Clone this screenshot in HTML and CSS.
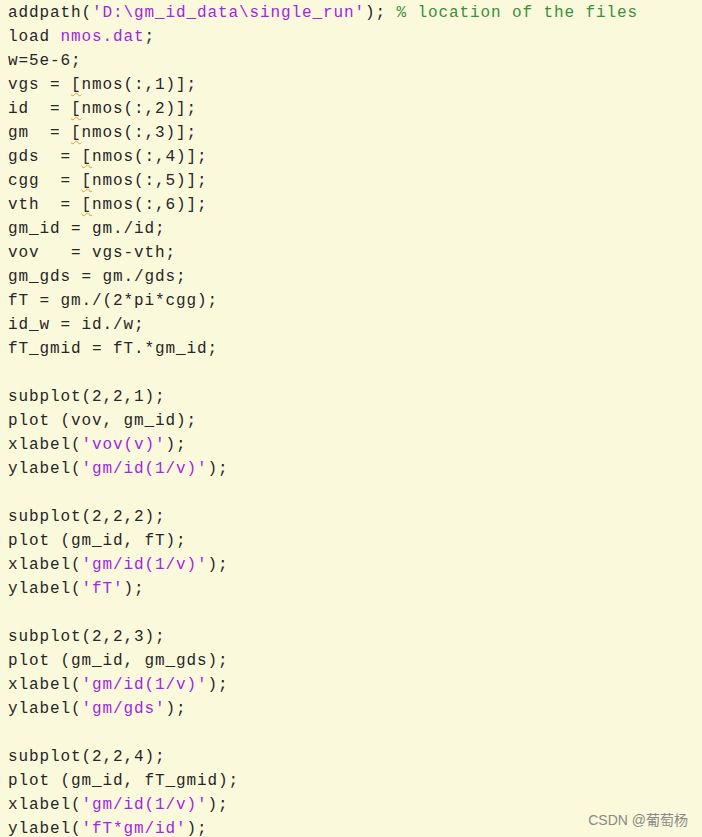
FILE: index.html
```html
<!DOCTYPE html>
<html>
<head>
<meta charset="utf-8">
<link rel="stylesheet" href="styles.css">
</head>
<body>
<pre class="code"><span>addpath(<span class="str">'D:\gm_id_data\single_run'</span>); <span class="cmt">% location of the files</span></span>
<span>load <span class="str">nmos.dat</span>;</span>
<span>w=5e-6;</span>
<span>vgs = <span class="warn">[</span>nmos(:,1)];</span>
<span>id  = <span class="warn">[</span>nmos(:,2)];</span>
<span>gm  = <span class="warn">[</span>nmos(:,3)];</span>
<span>gds  = <span class="warn">[</span>nmos(:,4)];</span>
<span>cgg  = <span class="warn">[</span>nmos(:,5)];</span>
<span>vth  = <span class="warn">[</span>nmos(:,6)];</span>
<span>gm_id = gm./id;</span>
<span>vov   = vgs-vth;</span>
<span>gm_gds = gm./gds;</span>
<span>fT = gm./(2*pi*cgg);</span>
<span>id_w = id./w;</span>
<span>fT_gmid = fT.*gm_id;</span>

<span>subplot(2,2,1);</span>
<span>plot (vov, gm_id);</span>
<span>xlabel(<span class="str">'vov(v)'</span>);</span>
<span>ylabel(<span class="str">'gm/id(1/v)'</span>);</span>

<span>subplot(2,2,2);</span>
<span>plot (gm_id, fT);</span>
<span>xlabel(<span class="str">'gm/id(1/v)'</span>);</span>
<span>ylabel(<span class="str">'fT'</span>);</span>

<span>subplot(2,2,3);</span>
<span>plot (gm_id, gm_gds);</span>
<span>xlabel(<span class="str">'gm/id(1/v)'</span>);</span>
<span>ylabel(<span class="str">'gm/gds'</span>);</span>

<span>subplot(2,2,4);</span>
<span>plot (gm_id, fT_gmid);</span>
<span>xlabel(<span class="str">'gm/id(1/v)'</span>);</span>
<span>ylabel(<span class="str">'fT*gm/id'</span>);</span></pre>
<div class="mark">CSDN @葡萄杨</div>
</body>
</html>
```
FILE: styles.css
```css
html, body {
  margin: 0;
  padding: 0;
  background: #fbf9dc;
  width: 702px;
  height: 837px;
  overflow: hidden;
}
body {
  position: relative;
}
.code {
  margin: 0;
  padding: 1px 0 0 8px;
  font-family: "Liberation Mono", "Courier New", monospace;
  font-size: 16px;
  letter-spacing: 0.9px;
  line-height: 24px;
  color: #262626;
  white-space: pre;
}
.str {
  color: #a126e0;
}
.cmt {
  color: #3a8f3a;
}
.warn {
  text-decoration: underline wavy #e89a2c;
  text-decoration-thickness: 1px;
  text-underline-offset: 3px;
}
.mark {
  position: absolute;
  right: 14px;
  bottom: 8px;
  font-family: "Liberation Sans", "Noto Sans CJK SC", sans-serif;
  font-size: 14px;
  color: #8a8a84;
}
```
